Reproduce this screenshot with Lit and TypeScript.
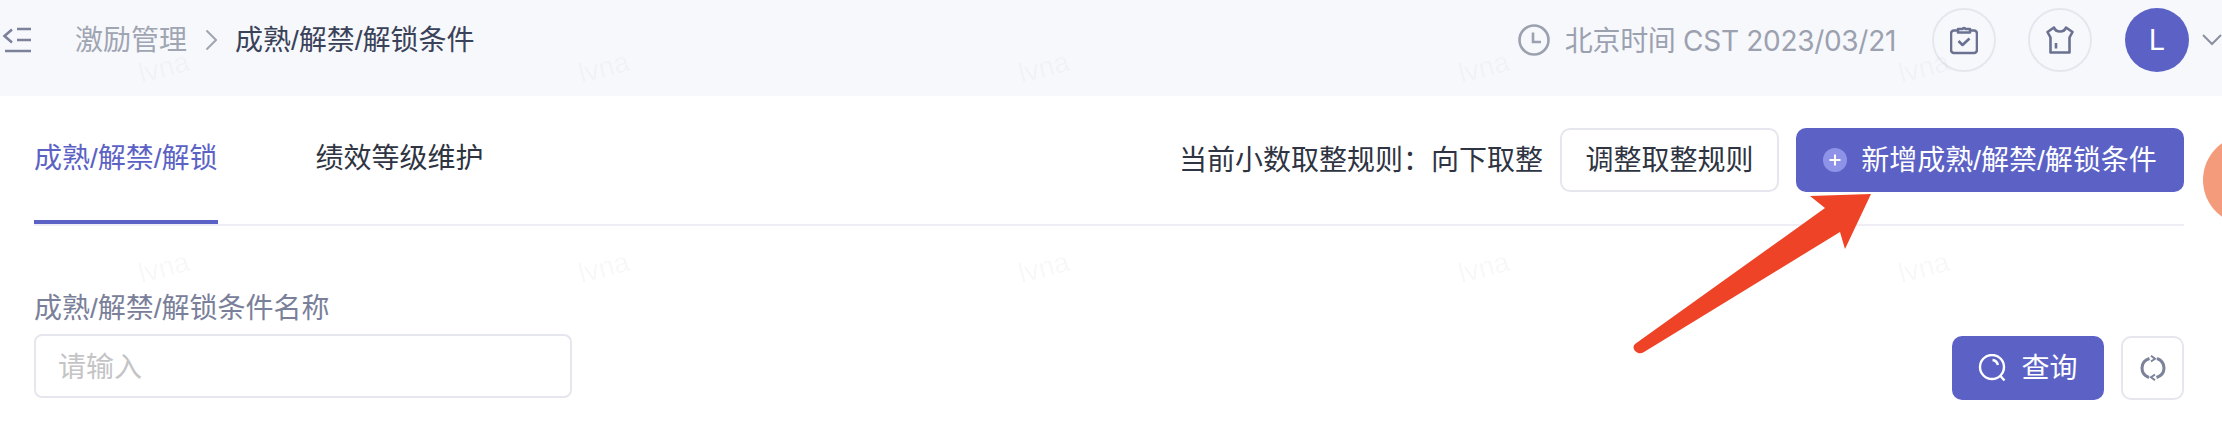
import { LitElement, html, css } from "lit";
import { customElement } from "lit/decorators.js";

const marks = Array.from({ length: 10 }, () => "lvna");
const ruleText = "当前小数取整规则\uFF1A向下取整";

@customElement("app-root")
export class AppRoot extends LitElement {
  static styles = css`
    :host {
      display: block;
      width: 2222px;
      height: 438px;
      position: relative;
      overflow: hidden;
      background: #fff;
      font-family: "Liberation Sans", "Noto Sans CJK SC", sans-serif;
      font-size: 28px;
      line-height: 40px;
      color: #2f3442;
    }
    svg { display: block; flex: none; }
    .t { padding-top: 2px; }
    .header {
      box-sizing: border-box;
      height: 96px;
      padding-bottom: 16px;
      background: #f7f8fc;
      display: flex;
      align-items: center;
    }
    .crumb-parent { margin-left: 43px; color: #a0a5b2; }
    .crumb-sep { margin: 0 18px 0 18px; }
    .crumb-current { color: #3a4259; }
    .status { margin-left: auto; display: flex; align-items: center; }
    .time {
      margin-left: 15px;
      color: #9ba1af;
      letter-spacing: -0.3px;
      font-family: "Inter", "Noto Sans CJK SC", sans-serif;
    }
    .round {
      box-sizing: border-box;
      width: 64px;
      height: 64px;
      border-radius: 50%;
      border: 2px solid #e6e7ed;
      display: flex;
      align-items: center;
      justify-content: center;
      margin-left: 32px;
    }
    .time + .round { margin-left: 36px; }
    .avatar {
      width: 64px;
      height: 64px;
      border-radius: 50%;
      background: #5c62c5;
      color: #fff;
      display: flex;
      align-items: center;
      justify-content: center;
      margin-left: 33px;
      font-family: "Inter", sans-serif;
      font-size: 29px;
    }
    .caret { margin-left: 13px; }

    .tabs {
      margin: 0 38px 0 34px;
      height: 130px;
      box-sizing: border-box;
      border-bottom: 2px solid #eeeef4;
      display: flex;
      align-items: flex-start;
    }
    .tab {
      box-sizing: border-box;
      height: 128px;
      padding-top: 43px;
      border-bottom: 4px solid transparent;
      margin-right: 98px;
    }
    .tab.active { color: #5c62c5; border-bottom-color: #5c62c5; }
    .actions {
      margin-left: auto;
      margin-top: 32px;
      display: flex;
      align-items: center;
      gap: 17px;
      color: #2f3442;
    }
    .btn {
      box-sizing: border-box;
      height: 64px;
      border-radius: 10px;
      display: flex;
      align-items: center;
      justify-content: center;
    }
    .btn.line { border: 2px solid #e6e6ee; background: #fff; }
    .btn.fill { background: #5c62c5; color: #fff; }
    .adjust { width: 219px; }
    .create { width: 388px; gap: 14px; }
    .plus {
      width: 24px;
      height: 24px;
      border-radius: 50%;
      background: #8f93e8;
    }

    .filter {
      margin: 0 38px 0 34px;
      padding-top: 63px;
      display: flex;
      align-items: flex-end;
      justify-content: space-between;
    }
    .field { margin-bottom: 2px; }
    .label { color: #7a8099; margin-bottom: 5px; }
    .input {
      box-sizing: border-box;
      width: 538px;
      height: 64px;
      border: 2px solid #e6e6ee;
      border-radius: 8px;
      padding: 4px 0 0 22px;
      display: flex;
      align-items: center;
      color: #c4c4c6;
    }
    .query-group { display: flex; gap: 17px; }
    .query { width: 152px; gap: 14px; }
    .reset { width: 63px; }

    .marks {
      position: absolute;
      left: -56px;
      top: -32px;
      display: grid;
      grid-template-columns: repeat(5, 440px);
      grid-auto-rows: 200px;
      pointer-events: none;
    }
    .mark {
      display: flex;
      align-items: center;
      justify-content: center;
      transform: rotate(-15deg);
      color: rgba(60, 60, 90, 0.045);
    }
    .orange {
      position: absolute;
      left: 2203px;
      top: 135px;
      width: 90px;
      height: 90px;
      border-radius: 50%;
      background: #f39b7a;
    }
    .arrow { position: absolute; left: 0; top: 0; pointer-events: none; }
  `;

  render() {
    return html`
      <div class="header">
        <svg width="32" height="28" viewBox="0 0 32 28" fill="none" stroke="#7b8299" stroke-width="2.6">
          <path d="M12 3.500 4.500 10l7.500 6.500" />
          <path d="M17 3h14M17 14h14M5 25h26" />
        </svg>
        <span class="crumb-parent t">激励管理</span>
        <svg class="crumb-sep" width="12" height="22" viewBox="0 0 12 22" fill="none" stroke="#a0a5b2" stroke-width="2">
          <path d="M1.500 1.500 11 11l-9.500 9.500" />
        </svg>
        <span class="crumb-current t">成熟/解禁/解锁条件</span>
        <div class="status">
          <svg width="32" height="32" viewBox="0 0 32 32" fill="none" stroke="#9ba1af" stroke-width="2.6">
            <circle cx="16" cy="16" r="14.500" />
            <path d="M15 8.500V18h8" />
          </svg>
          <span class="time t">北京时间 CST 2023/03/21</span>
          <div class="round">
            <svg width="28" height="30" viewBox="0 0 28 30" fill="none" stroke="#6b7190" stroke-width="2.6" stroke-linejoin="round">
              <path d="M8 5.500H4a3 3 0 0 0-3 3V25a3 3 0 0 0 3 3h20a3 3 0 0 0 3-3V8.500a3 3 0 0 0-3-3h-4" />
              <path d="M8 7.500V4h4.500a1.600 1.600 0 0 1 3 0H20v3.500z" />
              <path d="m8.500 16 4 4 7-6.500" />
            </svg>
          </div>
          <div class="round">
            <svg width="28" height="28" viewBox="0 0 28 28" fill="none" stroke="#6b7190" stroke-width="2.6" stroke-linejoin="round">
              <path d="M8 1.500 1.500 6l3 5.500v15h19v-15L26.500 6 20 1.500c-1 3-3 4-6 4s-5-1-6-4z" />
              <path d="M10 17v5.500" />
            </svg>
          </div>
          <div class="avatar">L</div>
          <svg class="caret" width="20" height="12" viewBox="0 0 20 12" fill="none" stroke="#8a90a0" stroke-width="2">
            <path d="M1 1l9 9 9-9" />
          </svg>
        </div>
      </div>

      <div class="tabs">
        <div class="tab active">成熟/解禁/解锁</div>
        <div class="tab">绩效等级维护</div>
        <div class="actions">
          <span class="t">${ruleText}</span>
          <div class="btn line adjust"><span class="t">调整取整规则</span></div>
          <div class="btn fill create">
            <svg class="plus" viewBox="0 0 24 24" fill="none" stroke="#fff" stroke-width="2">
              <path d="M12 6.500v11M6.500 12h11" />
            </svg>
            <span class="t">新增成熟/解禁/解锁条件</span>
          </div>
        </div>
      </div>

      <div class="filter">
        <div class="field">
          <div class="label">成熟/解禁/解锁条件名称</div>
          <div class="input">请输入</div>
        </div>
        <div class="query-group">
          <div class="btn fill query">
            <svg width="29" height="28" viewBox="0 0 29 28" fill="none" stroke="#fff" stroke-width="2.4">
              <circle cx="14" cy="13" r="12" />
              <path d="M14.500 6c2.800.3 4.800 2.300 5.400 5" />
              <path d="m22.500 22 4 4.500" />
            </svg>
            <span class="t">查询</span>
          </div>
          <div class="btn line reset">
            <svg width="26" height="26" viewBox="0 0 26 26" fill="none" stroke="#7b8299" stroke-width="3">
              <path d="M9.500 3.500C5 5 2 8.700 2 13c0 4.300 3 8 7 9.500" />
              <path d="M16.500 22.500C21 21 24 17.300 24 13c0-4.300-3-8-7-9.500" />
              <path d="M11 0.800 15 3.800 11 6.500" stroke-width="2" />
              <path d="M15 25.200 11 22.200 15 19.500" stroke-width="2" />
            </svg>
          </div>
        </div>
      </div>

      <div class="orange"></div>
      <svg class="arrow" width="2222" height="438" viewBox="0 0 2222 438">
        <path
          fill="#ee4327"
          d="M1871 194 1810 196 1825 208 1635 344Q1632 347 1635 351L1638 353Q1641 354 1644 352L1840 232 1845 249Z"
        />
      </svg>
      <div class="marks">
        ${marks.map((m) => html`<div class="mark">${m}</div>`)}
      </div>
    `;
  }
}
